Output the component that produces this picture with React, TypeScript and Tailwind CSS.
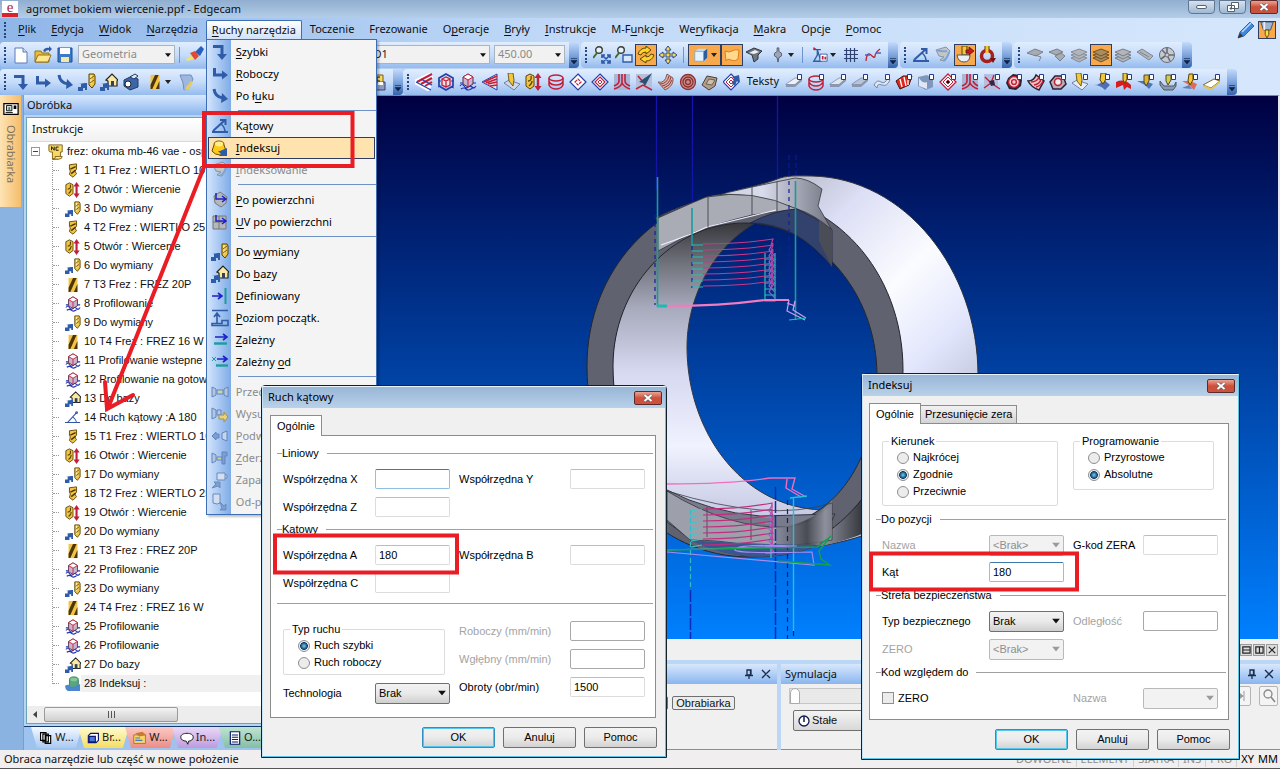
import React, { ReactNode, useState } from "react";

const B = "#2f5ca8";
const R = "#c0203a";

/* ---------- icon drawings, 18 x 18 ---------- */

const tinyArrow = (
  <g fill={B}>
    <path d="M0 18v-4h3v-3H1l6-1h2v7H7v-2H5v3Z" />
  </g>
);
const goldTool = (
  <g>
    <path d="M11 1h5l1 2v8l-3 4-3-3Z" fill="#f0c64a" stroke="#5b4300" strokeWidth="1" />
    <path d="M13 2v9" stroke="#fff0b0" strokeWidth="1.200" />
    <path d="M12 6l4-3M12 10l4-3" stroke="#7a5a08" strokeWidth="1" />
  </g>
);
const badge = <path d="M12.5 1.5h4v5h-4z" fill="#fff" stroke="#223a8c" />;
const boxShape = (
  <g fill="none">
    <path d="M1 13q2-3 4 0t4 1 4 0 4-1M2 16q3-2 5 0t5 0 4-1M1 10h3M14 10h3" stroke="#2035b0" strokeWidth="1.200" />
    <path d="M4 4l5-3 5 3v7l-5 3-5-3Z" fill="#c9b4cf" stroke="#5a2946" />
    <path d="M4 4l5 3 5-3-5-3ZM9 7v7" fill="#fff" stroke={R} />
  </g>
);
const slab = (fill: string) => (
  <g>
    <path d="M1 11 10 5h7l-7 7H1Z" fill={fill} stroke="#7e8ea8" strokeWidth="0.8" />
    <path d="M1 11v3h9l7-6V5l-7 6Z" fill="#8b97ac" />
  </g>
);
const darkRound = (
  <g>
    <path d="M3 5l5-4 6 1 3 5-1 6-5 4-7-1-3-6Z" fill="#2b2230" />
    <circle cx="9" cy="9" r="5.4" fill="#f6cfd0" stroke={R} strokeWidth="1.4" />
    <circle cx="9" cy="9" r="2.4" fill="none" stroke={R} strokeWidth="1.4" />
  </g>
);
const layer = (a: string, c: string) => (
  <g stroke={c} strokeWidth="0.9" fill={a}>
    <path d="M1 12l8-3 8 3-8 4Z" />
    <path d="M1 9l8-3 8 3-8 4Z" />
    <path d="M1 6l8-3 8 3-8 4Z" />
  </g>
);
const drillOver = (base: string) => (
  <g>
    <path d="M1 10l5-3 11 4-6 6Z" fill={base} stroke="#596a88" strokeWidth="0.8" />
    <path d="M5 0h5l1 7-1 6-4-5Z" fill="#f1c73b" stroke="#5b4300" strokeWidth="0.8" />
  </g>
);

const ICONS: Record<string, ReactNode> = {
  rapid: <g><path d="M2 3.5h9V12" fill="none" stroke={B} strokeWidth="3" /><path d="M6 11h10l-5 6Z" fill={B} /></g>,
  feed: <g><path d="M3.5 3v7H12" fill="none" stroke={B} strokeWidth="3" /><path d="M11 5.5l6 4.5-6 4.5Z" fill={B} /></g>,
  arc: <g><path d="M3 2q1 8 9 9" fill="none" stroke={B} strokeWidth="3" /><path d="M11 6l6 6-7 4Z" fill={B} /></g>,
  angle: <g fill="none" stroke={B} strokeWidth="2"><path d="M1 15h16M2 14 14 3M9 3h5.5v5" /><path d="M10 7q4 3 4 8" strokeWidth="1.5" /></g>,
  thinAngle: <g fill="none" stroke="#3355a5" strokeWidth="1.200"><path d="M0 14h17M3 14 13 3M9 8q3 2 4 6" /><circle cx="13" cy="3" r="1" /></g>,
  index: <g><path d="M3 6q0-4 5-4t5 4l2 6q-1 4-6 4t-8-4Z" fill="#ffc91c" stroke="#6b4d00" /><ellipse cx="8" cy="5" rx="4" ry="2.4" fill="#fff08a" /><path d="M9 12l7-3v8h-8l2-2-3-3Z" fill={B} /></g>,
  indexGreen: <g><path d="M5 4q0-3 5-3t5 3v9H5Z" fill="#57a67c" stroke="#3a7a5c" /><path d="M0 11q6-3 7 2l10-4v8H3Q0 15 0 11Z" fill="#4c86cf" /><ellipse cx="10" cy="4" rx="4" ry="2" fill="#86c79c" /></g>,
  indexing: <g fill="#c3c6c4" stroke="#8d939e"><path d="M2 4l10-3 4 4-5 10-5-1 4-3-5-1Z" /><path d="M3 4q4 2 10 1M9 15q5-3 6-9" fill="none" stroke="#7ea3d7" strokeWidth="2" /></g>,
  surfMove: <g><path d="M3 5l6-4 7 5-1 6-5 4-6-4Z" fill="#b4b7bd" stroke="#777" /><path d="M5 2v6h9M11 5l4 3-4 3" fill="none" stroke="#1d22c8" strokeWidth="1.5" /></g>,
  uvMove: <g><path d="M2 3h13v13H2ZM2 9h13M8 3v13" fill="#b4b7bd" stroke="#777" /><path d="M5 2v6h9M11 5l4 3-4 3" fill="none" stroke="#1d22c8" strokeWidth="1.5" /></g>,
  toChange: <g>{goldTool}{tinyArrow}</g>,
  toHome: <g><path d="M6 7l6-6 6 6-1 1v5H8V8Z" fill="#fae9a0" stroke="#222" strokeWidth="1.2" /><path d="M11 8h3v5h-3Z" fill="#36415a" />{tinyArrow}</g>,
  define: <g><path d="M1 9h9M7 6l4 3-4 3" fill="none" stroke="#1d22c8" strokeWidth="1.6" /><path d="M14.5 1v16" stroke="#1e9aa0" strokeWidth="2" /></g>,
  level: <g fill="none" stroke={B} strokeWidth="1.6"><path d="M1 1.5h16M6 15V5M3 8l3-4 3 4M1 16.5h16v-5h-6v3H1Z" /></g>,
  dep: <g><path d="M4 6h11M12 3l4 3-4 3" fill="none" stroke="#1d22c8" strokeWidth="1.6" /><path d="M3 12.5h13" stroke="#1e9aa0" strokeWidth="2.4" /></g>,
  depFrom: <g><path d="M1 4l4 4M5 4 1 8" stroke="#1e9aa0" /><path d="M6 6h9M12 3l4 3-4 3" fill="none" stroke="#1d22c8" strokeWidth="1.6" /><path d="M5 12.5h12" stroke="#1e9aa0" strokeWidth="2.4" /></g>,
  chuckA: <g fill="#b3c7e4" stroke="#6285bd"><path d="M1 4l4 2v6l-4 2ZM17 4l-4 2v6l4 2Z" /><path d="M6 7h6v4H6Z" fill="#c9d7a8" /></g>,
  chuckB: <g fill="#b3c7e4" stroke="#6285bd"><path d="M1 3l4 2v7l-4 2Z" /><path d="M6 5h4v5H6Z" /><path d="M8 10h5V7l4 5-4 5v-3H8Z" fill="#e7d37c" stroke="#a09150" /></g>,
  chuckC: <g fill="#7c9ed2" stroke="#6285bd"><path d="M1 9l4-4v2h3v4H5v2Z" /><path d="M16 4l-5 2v6l5 2Z" fill="#c5d5ec" /></g>,
  chuckD: <g fill="#b3c7e4" stroke="#6285bd"><path d="M1 4l4 2v6l-4 2Z" /><path d="M6 8h5v3H6Z" fill="#c9d7a8" /><path d="M11 3h5v4h-2v8h-3Z" fill="#7c9ed2" /></g>,
  park: <g fill="#d3dff0" stroke="#6b8bbd"><path d="M6 2h8v7H6ZM14 4h2v3h-2" /><path d="M1 17l4-4-2-2h6v6l-2-2Z" fill="#7c9ed2" /></g>,
  unpark: <g fill="#d3dff0" stroke="#6b8bbd"><path d="M2 1h7v9l-3 1-4-1Z" /><path d="M9 9l4 4 2-2v6H9l2-2Z" fill="#7c9ed2" /></g>,
  newFile: <g><path d="M3 2h8l4 4v11H3Z" fill="#fff" stroke="#5a7cb4" /><path d="M11 2v4h4" fill="#cfdcf0" stroke="#5a7cb4" /></g>,
  open: <g><path d="M1 5h6l1 2h7v9H1Z" fill="#e9bd3c" stroke="#96701a" /><path d="M4 9h13l-3 7H1Z" fill="#ffe88b" stroke="#96701a" /><path d="M9 5q2-4 6-3V0l3 3-3 3V4q-3 0-4 2Z" fill={B} /></g>,
  save: <g><path d="M2 2h14v14H2Z" fill="#3b79c9" stroke="#1f4d93" /><path d="M4 2h10v6H4Z" fill="#fff" /><path d="M5 11h8v5H5Z" fill="#f2e8a8" /></g>,
  brush: <g><path d="M9 6l6-6 3 3-4 7Z" fill="#285fba" /><path d="M4 7l5-2 4 5-4 4Z" fill="#e2492f" /><path d="M0 13l5-3 3 3-7 2Z" fill="#f6e35c" /></g>,
  camera: <g><path d="M2 7l8-4 6 3v8l-8 3-6-4Z" fill="#3b66a8" stroke="#203a66" /><circle cx="6" cy="11" r="3" fill="#fff" stroke="#222" /><path d="M8 4l5-3 3 2-4 3Z" fill="#dfe8f8" stroke="#203a66" /></g>,
  endmill: <g><path d="M4 1h10v16H4Z" fill="#f2c443" /><path d="M4 12 9 1h4L6 17H4ZM10 17l4-9v9Z" fill="#4d3508" /></g>,
  drillTool: <g><path d="M5 2l8-1v6l-2 2 2 3-4 4-4-3 1-4-1-2Z" fill="#f2c443" stroke="#5b4300" /><path d="M6 7l6-3M7 12l5-4" stroke="#4d3508" strokeWidth="1.6" /></g>,
  hole: <g><path d="M1 3l4-2 4 2v10l-4 3-4-3Z" fill="#f2c443" stroke="#5b4300" /><path d="M3 8q4 0 3-5M4 13q3-2 3-5" fill="none" stroke="#5b4300" strokeWidth="1.300" /><path d="M13 4v10" stroke={R} strokeWidth="2.4" /><path d="M9.500 5 13 0l3.500 5ZM9.500 13l3.500 5 3.500-5Z" fill={R} /></g>,
  profile: boxShape,
  shield: <g><path d="M3 2h11l2 4-4 9-5 2-1-7Z" fill="#9fb7de" stroke="#6f8dbf" /><path d="M7 17l7-9 2 1-4 7Z" fill="#e6cf57" /></g>,
  nc: <g><path d="M1 1h15v8h-2v5q0 3-3 3H5V9H3Q1 9 1 7Z" fill="#f7d768" stroke="#7c5c0b" /><path d="M5 17q4 0 3-3h8q0 3-4 3Z" fill="#fbe69a" stroke="#7c5c0b" /><path d="M4 7V3l3 4V3M12 3.500H9V7h3" fill="none" stroke="#221a00" strokeWidth="1.100" /></g>,
  ncSave: <g><path d="M0 2h14v10H0Z" fill="#f7d768" stroke="#7c5c0b" /><path d="M2 8V4l3 4V4M11 4H8v4h3" fill="none" stroke="#221a00" strokeWidth="1.2" /><path d="M7 9h9v8H7Z" fill="#8c9ac0" stroke="#39466e" /><path d="M9 9h5v3H9Z" fill="#fff" /></g>,
  zoomFit: <g><circle cx="6" cy="4" r="3.300" fill="#e6f2ff" stroke="#3a3f2d" strokeWidth="1.400" /><path d="M4 7 0 12" stroke="#3b6d2a" strokeWidth="2" /><path d="M9 9l8 8M17 9l-8 8M9 12V9h3M14 9h3v3M17 14v3h-3M12 17H9v-3" stroke={B} strokeWidth="1.700" fill="none" /></g>,
  zoomWin: <g><circle cx="6" cy="4" r="3.300" fill="#e6f2ff" stroke="#3a3f2d" strokeWidth="1.400" /><path d="M4 7 0 12" stroke="#3b6d2a" strokeWidth="2" /><path d="M8 9h9v7H8Z" stroke={B} strokeWidth="1.400" fill="#d8e8fb" /></g>,
  rotate: <g fill="#ffd42a" stroke="#5a4700"><path d="M1 8Q3 2 9 2V0l5 4-5 4V6Q5 6 4 9Z" /><path d="M17 9q-2 6-8 6v2l-6-4 6-4v2q4 0 5-3Z" /></g>,
  pan: <path d="M9 0l3 4h-2v4h4V6l4 3-4 3v-2h-4v4h2l-3 4-3-4h2v-4H4v2L0 9l4-3v2h4V4H6Z" fill="#f6d850" stroke="#2c4a8a" />,
  cube: <g><path d="M2 5l4-3h10v10l-3 4H2Z" fill="#b9dcfa" /><path d="M2 5h10v11H2Z" fill="#e2f2ff" stroke="#5e88bd" strokeWidth="0.600" /><path d="M12 5l4-3v10l-4 4Z" fill="#2e5d9e" /></g>,
  sheet: <path d="M2 5q4 2 7 0t7-1l-1 9q-3 3-7 1t-5 1Z" fill="#ffd98e" stroke="#e27d13" />,
  part: <g><path d="M1 6l8-4 8 3-4 4v4l-4 3-2-7Z" fill="#6e7681" stroke="#30353d" /><path d="M4 7l6-3 4 2-5 2Z" fill="#eef1f5" /></g>,
  spindle: <path d="M8 1h2v4l3 2v3l-3 2-1 5-1-5-3-2V7l3-2Z" fill="#9aa5b5" stroke="#4e5868" />,
  axis: <g><path d="M2 3h8M6 3v6l-4 7h8Z" fill="none" stroke={B} strokeWidth="1.500" /><path d="M2 0l4 3H1Z" fill={R} /><path d="M9 8h8v8H9Z" fill="#fff" stroke={B} /><path d="M12 10v4M15 11v3" stroke={R} strokeWidth="2" /></g>,
  grid: <path d="M4.500 2v14M8.500 2v14M12.500 2v14M2 4.500h14M2 8.500h14M2 12.500h14" stroke="#2e4372" strokeWidth="1.200" />,
  spline: <g fill="none"><path d="M2 15Q3 5 7 9t4 1 5-7" stroke={R} strokeWidth="1.300" /><path d="M1 9h5M12 7h5" stroke="#4468b4" strokeWidth="1.300" /></g>,
  cup: <g><path d="M6 0h5v9H6Z" fill="#f4c63a" stroke="#5b4300" /><path d="M1 9h13q0 7-6 7T1 9Z" fill="#e9eff6" stroke="#4b5a73" /><path d="M10 4h3V1l5 4-5 4V7h-3Z" fill="#c9191f" stroke="#4a0a0a" strokeWidth="0.700" /></g>,
  ring: <g><path d="M9 0v6" stroke="#5b4300" strokeWidth="5" /><circle cx="9" cy="10" r="5.500" fill="none" stroke="#a8201c" strokeWidth="3.500" /><path d="M9 0v7" stroke="#f4c63a" strokeWidth="3" /><path d="M12 12l6 0-3 5Z" fill="#7b130f" /></g>,
  g1: <g fill="#a7abb2" stroke="#7b8089"><path d="M1 7l8-4 8 3-7 4Z" /><path d="M9 9l6 2-2 4" fill="none" /></g>,
  g2: <g fill="#a7abb2" stroke="#7b8089"><path d="M1 6l8-3 6 3-7 3ZM7 10l6-3 4 3-5 5Z" /></g>,
  g3: layer("#b2b6bc", "#7f858f"),
  g3on: layer("#a98c62", "#6b4b1c"),
  g5: layer("#b2b6bc", "#6f757f"),
  g6: <path d="M1 6l5-3 11 7-4 4Zm3 0l9 5" fill="#b2b6bc" stroke="#7f858f" />,
  g7: <g fill="#c6cad0" stroke="#666c76"><circle cx="9" cy="9" r="7.500" /><circle cx="9" cy="9" r="2" /><path d="M9 7V2M11 9h5M7 10l-4 3M8 8 4 4M10 11l2 4" strokeWidth="1.600" /></g>,
  hatch: <g fill="none"><path d="M17 2 2 9l13 7" stroke="#fff" strokeWidth="6" /><path d="M17 1 2 9M17 5 6 11M17 9l-7 4" stroke={R} strokeWidth="2" /><path d="M1 9l15 8M6 6l11 6" stroke="#2440a8" strokeWidth="1.200" /></g>,
  hatch2: <g fill="none" strokeWidth="1.700"><path d="M16 1 1 9l15 8Z" fill="#f6dfe4" stroke="#2440a8" strokeWidth="1" /><path d="M3 9 16 3M5 10l11-4M7 11l9-2M9 13l7-1" stroke={R} /></g>,
  poly: <g fill="none"><path d="M2 5l7-4 7 4v8l-7 4-7-4Z" stroke="#2440a8" strokeWidth="1.700" /><path d="M1 8h3M14 8h3M1 14l3-1M14 14l3 1" stroke="#2440a8" /><path d="M5 6l4-2 4 2v6l-4 2-4-2ZM5 6l4 2 4-2M9 8v6" stroke={R} fill="#f2e2ea" strokeWidth="1.300" /></g>,
  boxes: boxShape,
  drill: drillOver("#cfd8e6"),
  rings: <g fill="none" stroke={R} strokeWidth="1.500"><ellipse cx="9" cy="5" rx="7" ry="3" /><path d="M2 8q1 4 7 4t7-4M2 5v7q2 4 7 4t7-4V5" /></g>,
  diamond: <g fill="#fff"><path d="M9 1l8 8-8 8-8-8Z" stroke="#2440a8" strokeWidth="1.200" /><path d="M6 9l3-3 3 3-3 3Z" stroke={R} strokeWidth="1.200" strokeDasharray="3 1" /></g>,
  diamond2: <g fill="#fff"><path d="M9 1l8 8-8 8-8-8Z" stroke="#2440a8" strokeWidth="1.200" /><path d="M9 4l5 5-5 5-5-5Z" stroke={R} strokeWidth="1.200" /><path d="M9 7l2 2-2 2-2-2Z" stroke={R} /></g>,
  flow: <g><path d="M1 1h16v16H1Z" fill="#a9b6d6" /><path d="M6 1v7q0 3-5 5M9 1v9q-1 4-8 6M12 1v7q0 3 5 5M9 10q2 4 8 6" fill="none" stroke={R} strokeWidth="1.600" /></g>,
  flowArrow: <g><path d="M1 1h16v16H1Z" fill="#b5c1dc" /><path d="M1 16l7-4 9 5M3 3l5 6" stroke={R} fill="none" strokeWidth="1.500" /><path d="M17 0 10 13l-2-3-4-1Z" fill="#2d5173" /></g>,
  surf: <g><path d="M1 9q7 2 9-8l6 4q1 8-8 12Z" fill="#d9b2ad" stroke="#8b5a55" /><path d="M3 11q7 0 9-8M5 13q7-1 9-9M7 15q6-2 8-8" fill="none" stroke="#8f3d35" /></g>,
  spiral: <g fill="none" stroke="#8f3030" strokeWidth="1.300"><circle cx="9" cy="9" r="7.500" fill="#c78f8c" /><circle cx="9" cy="9" r="5" /><circle cx="9" cy="9" r="2.500" /></g>,
  rock: <g><path d="M1 12l5-9 10 2-2 8-6 4Z" fill="#b39c8c" stroke="#4b4038" /><path d="M5 11l3-5 6 1-3 5Z" fill="#cdbfa8" stroke="#665" /></g>,
  diaArrow: <g><path d="M8 1l8 8-8 8-8-8Z" fill="#fff" stroke="#2440a8" strokeWidth="1.200" /><path d="M8 4l5 5-5 5-5-5ZM8 7l2 2-2 2-2-2Z" fill="none" stroke={R} /><path d="M9 4l7-2 1 7-3-1-2 5-3-2 2-5Z" fill={B} /></g>,
  slabs: <g>{slab("#eef2f8")}{badge}</g>,
  rings2: <g><g fill="none" stroke={R} strokeWidth="1.500"><ellipse cx="9" cy="6" rx="7" ry="3" /><path d="M2 6v7q2 4 7 4t7-4V6M2 9q2 4 7 4t7-4" /></g>{badge}</g>,
  slab2: <g>{slab("#dfe6f0")}{badge}</g>,
  slab3: <g>{slab("#b8c4d8")}{badge}</g>,
  wave: <g><path d="M1 12q3-6 7-3t7-5l2 3q-3 7-8 5t-5 3Z" fill="#e1e7f0" stroke="#7888a3" />{badge}</g>,
  ribs: <g><path d="M1 8 8 3h9l-3 9-9 4Z" fill="#e02820" stroke="#49110e" /><path d="M5 6l2 8M9 4l2 9M13 3l0 9" stroke="#fff" strokeWidth="1.300" />{badge}</g>,
  block: <g><path d="M1 4l9-2 6 4v8l-7 3-8-4Z" fill="#7f96bd" /><path d="M2 5q4 6 8 4v7l-8-3Z" fill="#dfe7f4" />{badge}</g>,
  diaBadge: <g><path d="M9 1l8 8-8 8-8-8Z" fill="#fff" stroke={R} strokeWidth="1.300" /><path d="M9 4l5 5-5 5-5-5Z" fill="none" stroke={R} /><path d="M9 7l2 2-2 2-2-2Z" stroke={R} />{badge}</g>,
  flowBadge: <g><path d="M1 1h16v16H1Z" fill="#a9b6d6" /><path d="M6 1v7q0 3-5 5M9 1v9q-1 4-8 6M12 8q1 3 5 5M9 10q2 4 8 6" fill="none" stroke={R} strokeWidth="1.600" />{badge}</g>,
  starBadge: <g><path d="M1 1h14v16H1Z" fill="#b5c1dc" /><path d="M1 15l7-5 9 6M2 4l6 6 3-8" stroke={R} fill="none" strokeWidth="1.400" /><path d="M6 8l5-1 1 5-4 1Z" fill="#38224a" />{badge}</g>,
  roundBadge: <g>{darkRound}{badge}</g>,
  fanBadge: <g><path d="M1 8Q7 8 9 2l8 6-5 9Q4 14 1 8Z" fill="#f0c4c0" stroke="#2b2230" strokeWidth="1.500" /><path d="M4 9q6 0 8-5M7 12q6-1 7-6M9 14q5-1 7-6" fill="none" stroke={R} strokeWidth="1.400" />{badge}</g>,
  ballBadge: <g><path d="M1 9 6 3h8l3 8-5 5H4Z" fill="#b9adb8" stroke="#2b2230" strokeWidth="1.500" /><circle cx="9" cy="9" r="3.500" fill="#eee" stroke={R} strokeWidth="1.500" />{badge}</g>,
  toolA: <g>{drillOver("#e8edf5")}{badge}</g>,
  toolB: <g><path d="M1 12q7 0 9-6l7 6-5 5q-5-5-11-5Z" fill="#4f6fb0" /><path d="M8 0h5v6l-3 5-3-4Z" fill="#f1c73b" stroke="#5b4300" />{badge}</g>,
  toolC: <g><path d="M1 9q8-4 15 3v4l-4-2-3 3-1-5-7 3Z" fill="#d81d1d" /><path d="M8 0h4v6l-2 4-2-3Z" fill="#f1c73b" stroke="#5b4300" />{badge}</g>,
  toolD: <g><path d="M0 8h8l8 3-4 5-4-4Z" fill="#4d74b5" /><path d="M7 2h5v6l-3 5-2-4Z" fill="#e0b32c" stroke="#4a4a30" />{badge}</g>,
  toolE: <g><path d="M1 8l4 5h10l2-4v4l-3 4H5l-4-5Z" fill="#8e99aa" stroke="#4b5668" /><path d="M7 2h5v5l-3 5-2-4Z" fill="#d8ca4c" stroke="#4a4a30" />{badge}</g>,
  toolF: <g><path d="M1 8h8l7 3-3 6-5-5Z" fill="#de6a5a" /><path d="M1 15l7-3 3 4Z" fill="#6080b8" /><path d="M8 1h4v6l-3 5-2-4Z" fill="#f1c73b" stroke="#5b4300" />{badge}</g>,
  bar: <g><path d="M0 12 11 6l6 2-9 7Z" fill="#fff" stroke="#7c6a2a" /><path d="M0 12v2l8 3 9-7V8l-9 7Z" fill="#e8c44a" />{badge}</g>,
  monitor: <g><path d="M1 3h16v12H1Z" fill="#fff" stroke="#000" strokeWidth="1.400" /><path d="M4 5h6v6H4Z" fill="#cfe3d4" stroke="#000" /><path d="M12 5h3v4h-3Z" fill="#000" /><path d="M6 7h2v3H6Z" fill="#2e8080" /><path d="M3 13h8" stroke="#000" /></g>,
  copies: <path d="M2 2h7v10H2ZM5 4h7v10H5ZM8 6h7v10H8Z" fill="#fff" stroke="#000" strokeWidth="1.500" />,
  blueBox: <g><path d="M3 6l3-3h10v9l-3 3H3Z" fill="#fff" stroke="#0a1670" strokeWidth="1.500" /><path d="M4 7h8v7H4Z" fill="#4a78d8" stroke="#0a1670" strokeWidth="1.500" /></g>,
  card: <g><path d="M1 5h15v11H1Z" fill="#f5d36b" stroke="#9c6b16" /><path d="M3 3l9-2 5 4-9 2Z" fill="#c67b2e" /><path d="M3 9h6M3 12h9" stroke="#4a78b8" strokeWidth="1.400" /></g>,
  bubble: <path d="M9 3c5 0 8 2 8 5s-3 5-6 5l-1 4-2-4c-4 0-7-2-7-5s3-5 8-5Z" fill="#fff" stroke="#111" strokeWidth="1.200" />,
  list: <g><path d="M3 1h12v16H3Z" fill="#fff" stroke="#0a1670" strokeWidth="1.500" /><path d="M5 5h8M5 8h8M5 11h8M5 14h8" stroke="#0a1670" strokeWidth="1.300" /></g>,
  pencil: <g><path d="M1 17l2-6L13 1l4 4L7 15Z" fill="#3f86dd" stroke="#1c4f9a" strokeWidth="0.800" /><path d="M1 17l2-5 3 3Z" fill="#41332a" /><path d="M5 11 14 2" stroke="#bfe0ff" strokeWidth="1.500" /></g>,
  spindleOn: <g><path d="M2 0h14l-3 9H5Z" fill="#9fb4d4" stroke="#3c4c68" /><path d="M6 0v9" stroke="#e6eefa" strokeWidth="2" /><path d="M7 9h4v5l-2 4-2-4Z" fill="#f7dd4b" stroke="#5b4300" /></g>,
};

function Icon({ n, big }: { n: string; big?: boolean }) {
  return (
    <svg viewBox="0 0 18 18" className={big ? "h-[18px] w-[18px] shrink-0" : "h-4 w-4 shrink-0"} aria-hidden="true">
      {ICONS[n]}
    </svg>
  );
}

function Hot({ text }: { text: string }) {
  const i = text.indexOf("_");
  if (i < 0) return <>{text}</>;
  return (
    <>
      {text.slice(0, i)}
      <u className="underline-offset-2">{text[i + 1]}</u>
      {text.slice(i + 2)}
    </>
  );
}

/* ---------- toolbars ---------- */

function Grip() {
  return <span className="mx-1 h-4 w-0 shrink-0 border-l-2 border-dotted border-[#27477c]" />;
}
function Cap() {
  return (
    <span className="ml-1 flex h-[26px] w-[10px] shrink-0 items-end justify-center rounded-r bg-linear-to-b from-[#c3dafb] via-[#7fa5de] to-[#3463ab] pb-1">
      <svg viewBox="0 0 6 6" className="h-[6px] w-[6px]"><path d="M0 .5h6M0 2.500h6L3 6Z" fill="#0d2348" stroke="#0d2348" strokeWidth=".6" /></svg>
    </span>
  );
}
function Sep() {
  return <span className="mx-1 h-4 w-px shrink-0 bg-[#6f94cc]" />;
}
function Tool({ n, on, drop }: { n: string; on?: boolean; drop?: boolean }) {
  return (
    <button
      type="button"
      aria-label={n}
      className={
        "flex h-[22px] shrink-0 items-center justify-center " +
        (drop ? "w-[33px] gap-0.5 " : "w-[22px] ") +
        (on ? "border border-[#2f3d63] bg-[#f8a94c]" : "")
      }
    >
      <Icon n={n} big={!drop} />
      {drop && <svg viewBox="0 0 6 4" className="h-1 w-[6px]"><path d="M0 0h6L3 4Z" fill="#222" /></svg>}
    </button>
  );
}
function Group({ children, className = "" }: { children: ReactNode; className?: string }) {
  return (
    <div className={"flex h-[26px] shrink-0 items-center rounded bg-linear-to-b from-[#e0edfe] via-[#c6dcfa] to-[#95bbee] " + className}>
      <Grip />
      {children}
      <Cap />
    </div>
  );
}

function Select({ label, value, className, disabled, bar, id }: { label: string; value: string; className: string; disabled?: boolean; bar?: boolean; id?: string }) {
  return (
    <span className={"relative block shrink-0 " + className}>
      <select
        id={id}
        aria-label={id ? undefined : label}
        disabled={disabled}
        className={
          "block h-full w-full appearance-none border pl-[3px] pr-3 opacity-100 outline-none " +
          (bar
            ? "border-[#a9b4c2] bg-[#f1f1f1] pl-1 font-['Noto_Sans',sans-serif] text-[11px] " + (disabled ? "text-[#8a8a8a]" : "text-[#222]")
            : disabled
              ? "rounded-xs border-[#b9b9b9] bg-[#f2f2f2] text-[#8f8f8f]"
              : "rounded-xs border-[#707070] bg-linear-to-b from-[#f3f3f3] via-[#e9e9e9] to-[#cfcfcf] text-black")
        }
      >
        <option>{value}</option>
      </select>
      <svg viewBox="0 0 8 5" className={"pointer-events-none absolute top-1/2 right-1 -translate-y-1/2 " + (bar ? "h-1 w-[6px]" : "h-[5px] w-2")}>
        <path d="M0 0h8L4 5Z" fill={disabled && !bar ? "#9a9a9a" : "#111"} />
      </svg>
    </span>
  );
}

const MENUS = ["_Plik", "_Edycja", "_Widok", "_Narzędzia", "_Ruchy narzędzia", "Toczenie", "Frezowanie", "O_peracje", "_Bryły", "_Instrukcje", "M-F_unkcje", "We_ryfikacja", "_Makra", "Opcje", "_Pomoc"];

type Item = { t: string; i: string; off?: boolean; sel?: boolean };
const MENU_GROUPS: Item[][] = [
  [{ t: "_Szybki", i: "rapid" }, { t: "_Roboczy", i: "feed" }, { t: "Po ł_uku", i: "arc" }],
  [{ t: "Ką_towy", i: "angle" }, { t: "_Indeksuj", i: "index", sel: true }, { t: "_Indeksowanie", i: "indexing", off: true }],
  [{ t: "_Po powierzchni", i: "surfMove" }, { t: "_UV po powierzchni", i: "uvMove" }],
  [{ t: "Do _wymiany", i: "toChange" }, { t: "Do _bazy", i: "toHome" }, { t: "_Definiowany", i: "define" }, { t: "_Poziom początk.", i: "level" }, { t: "_Zależny", i: "dep" }, { t: "Zależny _od", i: "depFrom" }],
  [{ t: "Przec", i: "chuckA", off: true }, { t: "Wysu", i: "chuckB", off: true }, { t: "_Podw", i: "chuckC", off: true }, { t: "_Zderz", i: "chuckD", off: true }, { t: "Zapa", i: "park", off: true }, { t: "Od-p", i: "unpark", off: true }],
];

function DropMenu() {
  return (
    <div role="menu" className="absolute top-full -left-px z-10 w-[171px] border border-[#3d6db5] bg-[#f4f4f4] bg-linear-to-r from-[#d3e5fd] from-0% to-[#7fabe6] to-100% bg-[length:24px_100%] bg-no-repeat py-px shadow-[2px_2px_2px_rgba(0,0,0,0.25)]">
      {MENU_GROUPS.map((g, k) => (
        <div key={k}>
          {k > 0 && <div className="ml-[31px] h-2 py-[3px]"><div className="h-px bg-[#6f92c6]" /></div>}
          {g.map((m) => (
            <button
              key={m.t}
              type="button"
              role="menuitem"
              disabled={m.off}
              className={
                "mx-px flex h-[22px] w-[167px] items-center gap-[7px] border pl-0.5 text-left whitespace-nowrap " +
                (m.sel ? "border-[#2f3d63] bg-[#ffe3ae] " : "border-transparent ") +
                (m.off ? "text-[#8b8b8b]" : "text-black")
              }
            >
              <Icon n={m.i} big />
              <span><Hot text={m.t} /></span>
            </button>
          ))}
        </div>
      ))}
    </div>
  );
}

/* ---------- tree ---------- */

const ROWS: [string, string][] = [
  ["drillTool", "1 T1 Frez : WIERTLO 10"], ["hole", "2 Otwór : Wiercenie"], ["toChange", "3 Do wymiany"],
  ["drillTool", "4 T2 Frez : WIERTLO 25"], ["hole", "5 Otwór : Wiercenie"], ["toChange", "6 Do wymiany"],
  ["endmill", "7 T3 Frez : FREZ 20P"], ["profile", "8 Profilowanie"], ["toChange", "9 Do wymiany"],
  ["endmill", "10 T4 Frez : FREZ 16 W"], ["profile", "11 Profilowanie wstepne"], ["profile", "12 Profilowanie na gotowo"],
  ["toHome", "13 Do bazy"], ["thinAngle", "14 Ruch kątowy :A 180"], ["drillTool", "15 T1 Frez : WIERTLO 10"],
  ["hole", "16 Otwór : Wiercenie"], ["toChange", "17 Do wymiany"], ["drillTool", "18 T2 Frez : WIERTLO 25"],
  ["hole", "19 Otwór : Wiercenie"], ["toChange", "20 Do wymiany"], ["endmill", "21 T3 Frez : FREZ 20P"],
  ["profile", "22 Profilowanie"], ["toChange", "23 Do wymiany"], ["endmill", "24 T4 Frez : FREZ 16 W"],
  ["profile", "25 Profilowanie"], ["profile", "26 Profilowanie"], ["toHome", "27 Do bazy"], ["indexGreen", "28 Indeksuj :"],
];

const TABS: [string, string, string][] = [
  ["copies", "W...", "from-[#f4f9ff] to-[#a9c9f2]"],
  ["blueBox", "Br...", "from-[#fffbd0] to-[#f5dc5c]"],
  ["card", "W...", "from-[#fbc9c4] to-[#ea8d86]"],
  ["bubble", "In...", "from-[#e9d9f6] to-[#bd9be0]"],
  ["list", "O...", "from-[#bfe4d2] to-[#84bfa5]"],
];

function TreePanel() {
  return (
    <aside className="flex w-[352px] shrink-0 flex-col border-l border-[#6fa0dc] bg-[#b5d5f0] font-['Liberation_Sans',sans-serif] text-[11px]">
      <h2 className="flex h-5 items-center bg-linear-to-b from-[#d8e8fc] to-[#8ab5ee] pl-[3px] font-['Noto_Sans',sans-serif]">Obróbka</h2>
      <div className="mx-0.5 mt-0.5 flex flex-1 flex-col border border-[#6aa4b8] bg-white">
        <div className="flex h-6 items-center border-b border-[#d8d8d8] bg-linear-to-b from-white to-[#f1f1f1] pl-[5px] font-['Noto_Sans',sans-serif]">Instrukcje</div>
        <ul role="tree" className="flex-1">
          <li role="treeitem" className="flex h-[19px] items-center pl-1">
            <span className="flex h-[9px] w-[9px] items-center justify-center border border-[#8b9bb4] bg-white"><span className="h-px w-[5px] bg-[#26457c]" /></span>
            <span className="ml-2 flex"><Icon n="nc" /></span>
            <span className="ml-[3px]">frez: okuma mb-46 vae - osp</span>
          </li>
          {ROWS.map(([ic, t], k) => (
            <li key={t} role="treeitem" className="flex h-[19px] items-center pl-[25px] whitespace-nowrap">
              <span className={"w-0 self-start border-l border-dotted border-[#9a9a9a] " + (k === ROWS.length - 1 ? "h-[10px]" : "h-[19px]")} />
              <span className="mr-1.5 w-[6px] border-t border-dotted border-[#9a9a9a]" />
              <Icon n={ic} />
              <span className={"flex h-[17px] flex-1 items-center pl-[3px] " + (k === ROWS.length - 1 ? "bg-[#f0f0f0]" : "")}>{t}</span>
            </li>
          ))}
        </ul>
        <div className="flex h-[17px] items-center bg-[#ededed]">
          <svg viewBox="0 0 17 17" className="h-[17px] w-[17px]"><path d="M10 5v7L6 8.500Z" fill="#444" /></svg>
          <div className="flex h-[15px] w-[134px] items-center justify-center gap-0.5 rounded-xs border border-[#9a9a9a] bg-linear-to-b from-[#f4f4f4] to-[#cfcfcf]">
            {[0, 1, 2].map((i) => <span key={i} className="h-[7px] w-px bg-[#555]" />)}
          </div>
        </div>
      </div>
      <nav className="mt-0.5 flex h-6 items-start border-t border-[#163a6c] bg-[#9ec3ee] pl-[7px] font-['Noto_Sans',sans-serif] text-[#1a1a1a]">
        {TABS.map(([ic, t, c], k) => (
          <button key={k} type="button" className={"-mr-1 flex h-[21px] w-[51px] items-center justify-center gap-0.5 bg-linear-to-b [clip-path:polygon(0_0,100%_0,88%_100%,12%_100%)] " + c}>
            <svg viewBox="0 0 18 18" className="h-[14px] w-[14px] shrink-0">{ICONS[ic]}</svg>
            {t}
          </button>
        ))}
      </nav>
    </aside>
  );
}

/* ---------- 3D view ---------- */

function Scene() {
  const front = "M745 194C832 194 903 270 903 370C903 480 832 557 750 557C658 557 587 480 587 366C587 270 658 194 745 194Z";
  const frontIn = "M745 223C815 223 877 290 877 376C877 465 830 528 760 528C675 528 613 460 613 366C613 290 670 223 745 223Z";
  const backIn = "M820 206C880 206 950 270 950 360C950 440 890 511 822 510C740 507 687 430 687 347C687 280 735 206 820 206Z";
  const ys = [0, 6, 12, 18, 24, 30, 36, 42];
  return (
    <svg viewBox="375 96 903 543" preserveAspectRatio="xMinYMin slice" className="absolute inset-0 h-full w-full" aria-hidden="true">
      <defs>
        <linearGradient id="sky" gradientUnits="userSpaceOnUse" x1="0" y1="96" x2="0" y2="639"><stop offset="0" stopColor="#000042" /><stop offset="1" stopColor="#0080ff" /></linearGradient>
        <linearGradient id="outer" gradientUnits="userSpaceOnUse" x1="770" y1="180" x2="975" y2="390"><stop offset="0" stopColor="#b3b6c4" /><stop offset=".25" stopColor="#dcdff5" /><stop offset=".55" stopColor="#fbfcff" /><stop offset=".8" stopColor="#e2e6fc" /><stop offset="1" stopColor="#c3c7dc" /></linearGradient>
        <linearGradient id="inner" gradientUnits="userSpaceOnUse" x1="0" y1="225" x2="0" y2="520"><stop offset="0" stopColor="#3a3b40" /><stop offset=".12" stopColor="#6c6e77" /><stop offset=".28" stopColor="#a7aabc" /><stop offset=".5" stopColor="#d6d9f0" /><stop offset=".75" stopColor="#f0f2ff" /><stop offset="1" stopColor="#c3c7e2" /></linearGradient>
        <linearGradient id="low" gradientUnits="userSpaceOnUse" x1="780" y1="0" x2="870" y2="0"><stop offset="0" stopColor="#7d8090" /><stop offset=".3" stopColor="#41434b" /><stop offset=".5" stopColor="#8b8e9b" /><stop offset=".8" stopColor="#4d4f57" /><stop offset="1" stopColor="#25262a" /></linearGradient>
        <linearGradient id="notch" x1="0" x2="1" y1="0" y2="0"><stop offset="0" stopColor="#b4b7c2" /><stop offset=".6" stopColor="#d9dcec" /><stop offset="1" stopColor="#70737f" /></linearGradient>
        <clipPath id="hole"><path d={frontIn} /></clipPath>
      </defs>
      <rect x="375" y="96" width="1200" height="900" fill="url(#sky)" />
      <g stroke="#1414a8" strokeWidth="1.300">
        <path d="M656.500 96V190M692.500 96V210M777.500 96V182" />
        <path d="M789 155v40M796 155v25" strokeDasharray="5 3" strokeWidth="1" />
      </g>
      <path d="M656 218C700 195 750 190 780 178C790 175 800 176 812 176C905 178 978 270 978 375C978 470 920 530 820 546L760 500Z" fill="url(#outer)" stroke="#2d303c" strokeWidth="1" />
      <path d="M800 520Q850 470 880 410L960 460 900 515Q860 540 810 548Z" fill="url(#low)" />
      <path d={front} fill="#606270" stroke="#24262e" />
      <g clipPath="url(#hole)">
        <path d={frontIn} fill="url(#inner)" />
        <path d={backIn} fill="url(#sky)" stroke="#33353d" />
      </g>
      <path d={frontIn} fill="none" stroke="#24262e" />
      <path d="M657 218Q705 196 752 187L795 178Q808 178 822 189L818 206 832 230Q814 214 797 209Q740 188 707 197Z" fill="url(#notch)" stroke="#33353d" strokeWidth=".8" />
      <path d="M658 218Q705 197 707 197Q752 188 797 209L752 215Q715 224 690 234L658 251Z" fill="#a9acb4" stroke="#33353d" strokeWidth=".8" />
      <path d="M661 245Q690 235 707 227L752 216 776 210" fill="none" stroke="#eef" strokeWidth="1.200" />
      <path d="M750 223Q775 210 797 209Q815 217 832 230V267Q795 222 750 223Z" fill="#33416d" stroke="#20263c" strokeWidth=".8" />
      <path d="M819 220l13 10v37l-13-26Z" fill="#4b4d56" />
      <path d="M708 197v30M752 187v28M777 181v30" stroke="#4d4f57" />
      <path d="M667 490Q710 512 760 516L835 514 820 545Q780 560 745 556Q700 550 667 522Z" fill="#777b8b" stroke="#33353d" />
      <path d="M667 491Q730 530 790 527Q815 522 832 503V540Q770 550 745 545T690 540L667 520Z" fill="#9da0ab" stroke="#33353d" strokeWidth=".8" />
      <path d="M776 528Q812 524 832 500V537L815 545H776Z" fill="url(#low)" opacity=".9" />
      <path d="M690 540Q740 544 820 545Q780 560 745 556Q715 553 690 540Z" fill="#3a568f" />
      <path d="M667 491Q720 507 760 510T832 503M707 507v30M751 510v30" fill="none" stroke="#3d3f47" strokeWidth=".8" />
      <g fill="none" strokeWidth="1.200">
        <path d="M657.500 177v130M795.500 181v139M692 208v38" stroke="#1a9c9c" strokeWidth="1.600" />
        <path d="M655 215v90M692 246v42M789 181v120" stroke="#1b1b9c" strokeDasharray="4 4" />
        {ys.map((y) => (
          <g key={y}>
            <path d={`M703 ${244 + y}Q740 ${244 + y} 773 ${239 + y}l-2 6`} stroke="#c8388c" />
            <path d={`M692 ${245 + y}h11M765 ${253 + y}v6h10v-6`} stroke="#25c0b8" />
            <path d={`M773 ${243 + y}l-4 7 6 6`} stroke="#9a5ac8" />
          </g>
        ))}
        <path d="M657 306h10" stroke="#20b8b0" strokeWidth="3" />
        <path d="M667 306Q720 306 765 300h24" stroke="#f27bc0" strokeWidth="2" />
        <path d="M789 300l-2 11 18 9M795 301l-2 9 13 8M787 303l8 3" stroke="#cfa0f0" />
        <path d="M789 320l17-2" stroke="#25c0b8" />
        <path d="M667 484Q730 484 770 478H795l-3 11 14 8M787 479l-1 9 15 9" stroke="#ee6fc0" strokeWidth="1.400" />
        <path d="M790 498l17-2M793.500 498v133" stroke="#25c0d8" strokeWidth="1.400" />
        <path d="M690.500 510v80" stroke="#35b8c8" strokeDasharray="5 3" />
        <path d="M690.500 590v49M775.500 487v152" stroke="#1329b4" strokeWidth="1.500" strokeDasharray="12 2" />
        <path d="M787.500 500v139M793.500 631v8" stroke="#0c1c8c" strokeDasharray="5 4" />
        {ys.slice(0, 7).map((y) => (
          <g key={y}>
            <path d={`M703 ${509 + y}Q740 ${509 + y} 772 ${503 + y}v5`} stroke="#c02c80" />
            <path d={`M691 ${511 + y}l11-2M765 ${517 + y}h6v5`} stroke="#45c4c8" />
            <path d={`M772 ${505 + y}l-3 6 5 5`} stroke="#b85ac0" />
          </g>
        ))}
        <path d="M667 550l130-4Q740 544 735 549T812 552l2 13L667 552" stroke="#a48cf0" />
        <path d="M667 550l150-3 14-11-12 15 2 8 9 6-52-4" stroke="#15a050" strokeWidth="1.400" />
      </g>
    </svg>
  );
}

/* ---------- dialogs ---------- */

function CloseX() {
  return (
    <button type="button" aria-label="Zamknij" className="flex h-[14px] w-7 items-center justify-center rounded-xs border border-[#5e2a28] bg-linear-to-b from-[#e9a394] via-[#cd4f3a] to-[#c8543f]">
      <svg viewBox="0 0 10 8" className="h-2 w-[10px]"><path d="M1.500 1l7 6M8.500 1l-7 6" stroke="#5d5d66" strokeWidth="3.200" /><path d="M1.500 1l7 6M8.500 1l-7 6" stroke="#fff" strokeWidth="2" /></svg>
    </button>
  );
}
function Win({ title, className, bodyClass, tabs, children }: { title: string; className: string; bodyClass: string; tabs: string[]; children: ReactNode }) {
  return (
    <section role="dialog" aria-label={title} className={"absolute z-20 rounded-t-sm border border-[#10212e] bg-[#f0f0f0] font-['Liberation_Sans',sans-serif] text-[11px] text-black " + className}>
      <div className="border border-t-[#eaf3fc] border-r-[#5cc4e4] border-b-[#5cc4e4] border-l-[#c9e4f4]">
        <header className="flex h-[21px] items-center justify-between bg-linear-to-b from-[#98b6d6] to-[#b9d1ea] pr-[3px] pl-[5px]">
          <h2 className="font-['Noto_Sans',sans-serif] text-[11px]">{title}</h2>
          <CloseX />
        </header>
        <div className={"pt-[7px] pr-2 pb-2 " + bodyClass}>
          <div className="flex items-end">
            {tabs.map((t, k) => (
              <button key={t} type="button" className={k === 0 ? "relative z-10 -mb-px h-[21px] w-[52px] border border-b-0 border-[#8c8c8c] bg-white" : "h-[18px] border border-b-0 border-l-0 border-[#8c8c8c] bg-linear-to-b from-[#f2f2f2] to-[#d4d4d4] px-1"}>{t}</button>
            ))}
          </div>
          {children}
          <footer className="flex justify-end gap-2 pt-[9px]">
            {["OK", "Anuluj", "Pomoc"].map((t) => (
              <button key={t} type="button" className={"h-[21px] w-[73px] rounded-xs border bg-linear-to-b from-[#f3f3f3] via-[#ebebeb] to-[#d2d2d2] " + (t === "OK" ? "border-[#2f8fc0] shadow-[inset_0_0_0_1px_#55c6ee]" : "border-[#707070]")}>{t}</button>
            ))}
          </footer>
        </div>
      </div>
    </section>
  );
}
function Head({ t }: { t: string }) {
  return (
    <div className="flex h-4 items-center">
      <span className="-ml-[6px] h-px w-[5px] bg-[#a0a0a0]" />
      <h3>{t}</h3>
      <span className="mr-0.5 ml-2 h-px flex-1 bg-[#a0a0a0]" />
    </div>
  );
}
function Field({ label, id, value = "", off, focus, narrow }: { label: string; id: string; value?: string; off?: boolean; focus?: boolean; narrow?: string }) {
  const [v, setV] = useState(value);
  return (
    <div className="flex h-5 items-center">
      <label htmlFor={id} className={(narrow ?? "w-[92px]") + " shrink-0 " + (off ? "text-[#a3a3a3]" : "")}>{label}</label>
      <input id={id} value={v} disabled={off} autoFocus={id === "wx"} onChange={(e) => setV(e.target.value)} className={"h-5 w-[75px] rounded-xs border bg-white px-[3px] outline-none " + (focus ? "border-[#8fc0e0] border-t-[#3d7bad]" : off ? "border-[#a8a8a8]" : "border-[#dcdcdc] border-t-[#bcbcbc]")} />
    </div>
  );
}
function Drop({ label, id, value, off, w }: { label: string; id: string; value: string; off?: boolean; w: string }) {
  return (
    <div className="flex h-5 items-center">
      <label htmlFor={id} className={w + " shrink-0 " + (off ? "text-[#a3a3a3]" : "")}>{label}</label>
      <Select id={id} label={label} value={value} disabled={off} className="h-[21px] w-[75px]" />
    </div>
  );
}
function Radios({ legend, name, items, value, className }: { legend: string; name: string; items: string[]; value: string; className: string }) {
  return (
    <fieldset className={"rounded-xs border border-[#dcdcdc] pl-[14px] " + className}>
      <legend className="-ml-2 px-0.5 leading-4">{legend}</legend>
      {items.map((t) => (
        <label key={t} className="flex h-[17px] items-center gap-1">
          <input type="radio" name={name} defaultChecked={t === value} className="m-0 h-3 w-3 appearance-none rounded-full border border-[#8e8f8f] bg-[#ececec] checked:bg-radial checked:from-[#5cb3dd] checked:from-10% checked:via-[#123f6c] checked:via-50% checked:to-[#eee] checked:to-60%" />
          {t}
        </label>
      ))}
    </fieldset>
  );
}

function AngularDialog() {
  return (
    <Win title="Ruch kątowy" className="top-[385px] left-[261px] w-[406px]" bodyClass="pl-[7px]" tabs={["Ogólnie"]}>
      <div className="mr-px border border-[#8c8c8c] bg-white pt-[9px] pb-[14px] pl-3">
        <Head t="Liniowy" />
        <div className="mt-2 grid grid-cols-[167px_186px] gap-x-[9px] gap-y-2">
          <Field label="Współrzędna X" id="wx" focus />
          <Field label="Współrzędna Y" id="wy" narrow="w-[111px]" />
          <Field label="Współrzędna Z" id="wz" />
        </div>
        <div className="mt-1"><Head t="Kątowy" /></div>
        <div className="mt-2 grid grid-cols-[167px_186px] gap-x-[9px] gap-y-2">
          <Field label="Współrzędna A" id="wa" value="180" />
          <Field label="Współrzędna B" id="wb" narrow="w-[111px]" />
          <Field label="Współrzędna C" id="wc" />
        </div>
        <div className="mt-[10px] mr-0.5 -ml-[6px] h-px bg-[#a0a0a0]" />
        <div className="mt-[17px] grid grid-cols-[167px_186px] gap-x-[9px]">
          <div className="flex flex-col gap-2">
            <Radios legend="Typ ruchu" name="typ" items={["Ruch szybki", "Ruch roboczy"]} value="Ruch szybki" className="h-[54px] w-[162px]" />
            <Drop label="Technologia" id="tech" value="Brak" w="w-[92px]" />
          </div>
          <div className="flex flex-col gap-2">
            <Field label="Roboczy (mm/min)" id="rob" off narrow="w-[111px]" />
            <Field label="Wgłębny (mm/min)" id="wgl" off narrow="w-[111px]" />
            <Field label="Obroty (obr/min)" id="obr" value="1500" narrow="w-[111px]" />
          </div>
        </div>
      </div>
    </Win>
  );
}

function IndexDialog() {
  return (
    <Win title="Indeksuj" className="top-[373px] left-[861px] w-[379px]" bodyClass="pl-[6px]" tabs={["Ogólnie", "Przesunięcie zera"]}>
      <div className="mr-px border border-[#8c8c8c] bg-white pt-[9px] pb-[11px] pl-3">
        <div className="flex items-start gap-[15px]">
          <Radios legend="Kierunek" name="kier" items={["Najkrócej", "Zgodnie", "Przeciwnie"]} value="Zgodnie" className="h-[73px] w-[176px]" />
          <Radios legend="Programowanie" name="prog" items={["Przyrostowe", "Absolutne"]} value="Absolutne" className="h-[57px] w-[141px]" />
        </div>
        <div className="mt-[5px]"><Head t="Do pozycji" /></div>
        <div className="mt-2 grid grid-cols-[182px_145px] gap-x-[9px] gap-y-[7px]">
          <Drop label="Nazwa" id="naz" value="<Brak>" off w="w-[107px]" />
          <Field label="G-kod ZERA" id="gk" narrow="w-[70px]" />
          <Field label="Kąt" id="kat" value="180" focus narrow="w-[107px]" />
        </div>
        <div className="mt-[5px]"><Head t="Strefa bezpieczeństwa" /></div>
        <div className="mt-2 grid grid-cols-[182px_145px] gap-x-[9px] gap-y-2">
          <Drop label="Typ bezpiecznego" id="tb" value="Brak" w="w-[107px]" />
          <Field label="Odległość" id="odl" off narrow="w-[70px]" />
          <Drop label="ZERO" id="zer" value="<Brak>" off w="w-[107px]" />
        </div>
        <div className="mt-[5px]"><Head t="Kod względem do" /></div>
        <div className="mt-2 grid grid-cols-[182px_145px] gap-x-[9px]">
          <label className="flex h-5 items-center gap-1">
            <input type="checkbox" className="h-3 w-3 appearance-none border border-[#8e8f8f] bg-[#ececec]" />
            ZERO
          </label>
          <Drop label="Nazwa" id="naz2" value="" off w="w-[70px]" />
        </div>
      </div>
    </Win>
  );
}

/* ---------- docks ---------- */

function PinX() {
  return (
    <svg viewBox="0 0 30 12" className="h-3 w-[30px]"><g fill="none" stroke="#1b2c4c" strokeWidth="1.300"><path d="M4 2h4v5H4ZM2 7.500h8M6 8v3M7.500 2v5M19 2l8 8M27 2l-8 8" /></g></svg>
  );
}
function Dock({ title, className, children }: { title: string; className: string; children: ReactNode }) {
  return (
    <section className={"flex flex-col border-b border-[#8c8c8c] bg-[#f0f0f0] " + className}>
      <header className="flex h-5 items-center justify-between bg-linear-to-b from-[#d8e8fc] to-[#8ab5ee] pr-1 pl-1 text-[11px]">
        <h2>{title}</h2>
        <PinX />
      </header>
      {children}
    </section>
  );
}

export default function App() {
  return (
    <div className="relative flex min-h-screen flex-col overflow-hidden bg-[#f0eeee] font-['Noto_Sans',sans-serif] text-[11px] text-[#101010]">
      <header className="flex h-[18px] items-center justify-between bg-linear-to-b from-[#90aed0] to-[#b4cde8] pl-0.5">
        <div className="flex items-center gap-2">
          <span className="flex h-4 w-4 items-center justify-center border-b-4 border-[#d8232a] bg-white font-['Liberation_Serif',serif] text-[15px] leading-3 text-[#b01c28]">e</span>
          <h1 className="text-[11px] leading-4">agromet bokiem wiercenie.ppf - Edgecam</h1>
        </div>
        <div className="flex items-start gap-1 self-start pr-0.5">
          <button type="button" aria-label="Minimalizuj" className="flex h-[14px] w-[27px] items-center justify-center rounded-b-sm border border-[#63788f] bg-linear-to-b from-[#d5e2f0] to-[#9fb8d3]"><span className="h-1 w-[11px] rounded-xs border border-[#54616f] bg-white" /></button>
          <button type="button" aria-label="Przywróć" className="flex h-[14px] w-[27px] items-center justify-center rounded-b-sm border border-[#63788f] bg-linear-to-b from-[#d5e2f0] to-[#9fb8d3]">
            <svg viewBox="0 0 12 10" className="h-[10px] w-3"><path d="M4.500.5h7v6h-7ZM.5 3.500h7v6h-7Z" fill="#fff" stroke="#54616f" /><path d="M3 6h2v1H3Z" fill="#54616f" stroke="#54616f" /></svg>
          </button>
          <CloseX />
        </div>
      </header>

      <div className="bg-linear-to-r from-[#8fb6e8] via-[#c2daf8] via-45% to-[#d6e7fc]">
        <nav className="flex h-[23px] items-center gap-px">
          <Grip />
          {MENUS.map((m, k) =>
            k === 4 ? (
              <div key={m} className="relative z-10 mt-0.5 flex h-[19px] items-center self-start rounded-t-xs border border-b-0 border-[#3d6db5] bg-linear-to-b from-white to-[#cfe2fb]">
                <button type="button" className="px-[5px] whitespace-nowrap"><Hot text={m} /></button>
                <DropMenu />
              </div>
            ) : (
              <button key={m} type="button" className="px-[7px] whitespace-nowrap"><Hot text={m} /></button>
            ),
          )}
          <span className="flex-1" />
          <Icon n="pencil" big />
          <span className="mr-1 ml-0.5 flex h-[18px] w-[18px] items-center justify-center border border-[#2f3d63] bg-[#f8a94c]"><Icon n="spindleOn" /></span>
        </nav>

        <div className="flex h-[27px] items-center gap-0.5">
          <Group className="w-[579px]">
            <Tool n="newFile" /><Tool n="open" /><Tool n="save" />
            <Select bar disabled label="Tryb" value="Geometria" className="ml-0.5 h-[19px] w-[97px]" />
            <Sep />
            <Tool n="brush" />
            <Select bar label="Płaszczyzna" value="O1" className="ml-auto h-[19px] w-[121px]" />
            <Select bar disabled label="Poziom" value="450.00" className="ml-1 h-[19px] w-[71px]" />
          </Group>
          <Group>
            <Tool n="zoomFit" /><Tool n="zoomWin" /><Tool n="rotate" on /><Tool n="pan" /><Sep />
            <Tool n="cube" on drop /><Tool n="sheet" on /><Tool n="part" /><Tool n="spindle" drop /><Sep />
            <Tool n="axis" drop /><Tool n="grid" /><Tool n="spline" />
          </Group>
          <Group><Tool n="angle" /><Tool n="indexing" /><Tool n="cup" on /><Tool n="ring" /></Group>
          <Group><Tool n="g1" /><Tool n="g2" /><Tool n="g3" /><Tool n="g3on" on /><Tool n="g5" /><Tool n="g6" /><Tool n="g7" /></Group>
        </div>

        <div className="flex h-[27px] items-center">
          <Group className="w-[403px]">
            <Tool n="rapid" /><Tool n="feed" /><Tool n="arc" /><Tool n="toChange" /><Tool n="toHome" /><Tool n="camera" />
            <Tool n="endmill" drop /><Tool n="shield" />
            <span className="flex-1" />
            <Tool n="ncSave" />
          </Group>
          <Group>
            {["hatch", "poly", "boxes", "hatch2", "drill", "hole", "rings", "diamond", "diamond2", "flow", "flowArrow", "surf", "spiral", "rock", "diaArrow"].map((n) => <Tool key={n} n={n} />)}
            <button type="button" className="w-10 text-center">Teksty</button>
            {["slabs", "rings2", "slab2", "slab3", "wave", "ribs", "block", "diaBadge", "flowBadge", "starBadge", "roundBadge", "fanBadge", "ballBadge", "toolA", "toolB", "toolC", "toolD", "toolE", "toolF", "bar"].map((n) => <Tool key={n} n={n} />)}
          </Group>
        </div>
      </div>

      <main className="flex flex-1">
        <div className="w-[23px] shrink-0 bg-[#8ab3e2]">
          <button type="button" className="flex h-28 w-[21px] flex-col items-center gap-2 bg-linear-to-r from-[#fde3b4] to-[#f5bd69] pt-1.5 text-[#7d705a]">
            <Icon n="monitor" />
            <span className="[writing-mode:vertical-rl]">Obrabiarka</span>
          </button>
        </div>
        <TreePanel />
        <div className="flex min-w-0 flex-1 flex-col">
          <div className="relative flex-1 border-t border-r-2 border-t-[#7d8794] border-r-[#e4e8ee] bg-[#000042]"><Scene /></div>
          <div className="flex h-[21px] items-center justify-end gap-px bg-[#f0f0f0] pr-0.5">
            {["M2 2h8v7H2ZM2 5.500h8", "M2 2h8v7H2ZM6 2v7", "M2 2l7 7M9 2l-7 7"].map((d) => (
              <button key={d} type="button" aria-label="Okno" className="border border-[#9a9a9a] bg-[#dcdcdc]"><svg viewBox="0 0 11 11" className="h-[10px] w-[10px]"><path d={d} fill="none" stroke="#222" strokeWidth="1.300" /></svg></button>
            ))}
          </div>
          <div className="flex h-[90px] gap-1 bg-[#bcd6f6] pt-1">
            <Dock title="" className="w-[402px]">
              <div className="flex justify-end gap-1 pt-3 pr-[42px]">
                <button type="button" className="h-[14px] w-8 rounded-xs border border-[#707070] bg-[#ececec]" aria-label="Widok" />
                <button type="button" className="h-[14px] w-[63px] rounded-xs border border-[#707070] bg-[#ececec] font-['Liberation_Sans',sans-serif] text-[11px] leading-3">Obrabiarka</button>
              </div>
            </Dock>
            <Dock title="Symulacja" className="flex-1">
              <div className="flex items-center gap-2 px-2 pt-0.5">
                <input type="range" aria-label="Postęp" defaultValue={0} className="h-4 flex-1 appearance-none border border-[#c6c6c6] bg-[#e9e9e9] [&::-webkit-slider-thumb]:h-4 [&::-webkit-slider-thumb]:w-2.5 [&::-webkit-slider-thumb]:appearance-none [&::-webkit-slider-thumb]:rounded-t-full [&::-webkit-slider-thumb]:border [&::-webkit-slider-thumb]:border-[#aaa] [&::-webkit-slider-thumb]:bg-white" />
                <button type="button" aria-label="Do końca" className="flex h-5 w-6 items-center justify-center rounded-xs border border-[#b4b4b4] bg-[#f4f4f4]"><svg viewBox="0 0 14 12" className="h-3 w-[14px]"><path d="M1 2l5 4-5 4ZM6 2l5 4-5 4ZM12 1v10" fill="#999" stroke="#999" /></svg></button>
                <button type="button" aria-label="Szukaj" className="-mr-[6px] flex h-5 w-[19px] items-center justify-center rounded-xs border border-[#b4b4b4] bg-[#f4f4f4]"><svg viewBox="0 0 14 14" className="h-3.5 w-3.5"><circle cx="6" cy="5" r="4" fill="none" stroke="#888" strokeWidth="1.300" /><path d="M9 8l4 5" stroke="#888" strokeWidth="1.600" /></svg></button>
              </div>
              <button type="button" className="mt-1 ml-3 flex h-[21px] w-24 items-center gap-0.5 rounded-xs border border-[#707070] bg-linear-to-b from-[#f4f4f4] to-[#d8d8d8] pl-1 font-['Liberation_Sans',sans-serif]">
                <svg viewBox="0 0 12 12" className="h-3 w-3"><circle cx="6" cy="6" r="5" fill="#fff" stroke="#111a55" strokeWidth="1.300" /><path d="M6 1v6" stroke="#111a55" strokeWidth="1.500" /></svg>
                Stałe
              </button>
            </Dock>
          </div>
        </div>
      </main>

      <footer className="flex h-[19px] items-center justify-between border-b border-[#555] bg-[#f0eeee] pr-0.5 pl-1 text-[11px]">
        <span>Obraca narzędzie lub część w nowe położenie</span>
        <span className="flex gap-1 text-[#8e8e8e]">
          {["DOWOLNE", "ELEMENT", "SIATKA", "INS", "PRO"].map((t) => <span key={t} className="border-r border-[#d0d0d0] pr-1">{t}</span>)}
          <span className="text-black">XY</span>
          <span className="text-black">MM</span>
        </span>
      </footer>

      <AngularDialog />
      <IndexDialog />

      <svg viewBox="0 0 1280 769" className="pointer-events-none absolute top-0 left-0 z-30 h-[769px] w-[1280px] max-w-none" aria-hidden="true">
        <g fill="none" stroke="#ea1c24" strokeWidth="4">
          <path d="M204 113h148.500v53H204Z" />
          <path d="M275 535.500h182v37H275Z" />
          <path d="M871 553.500h206v36H871Z" />
          <path d="M204 167 108 408M105 382l2 27 26-14" strokeLinecap="round" />
        </g>
      </svg>
    </div>
  );
}
